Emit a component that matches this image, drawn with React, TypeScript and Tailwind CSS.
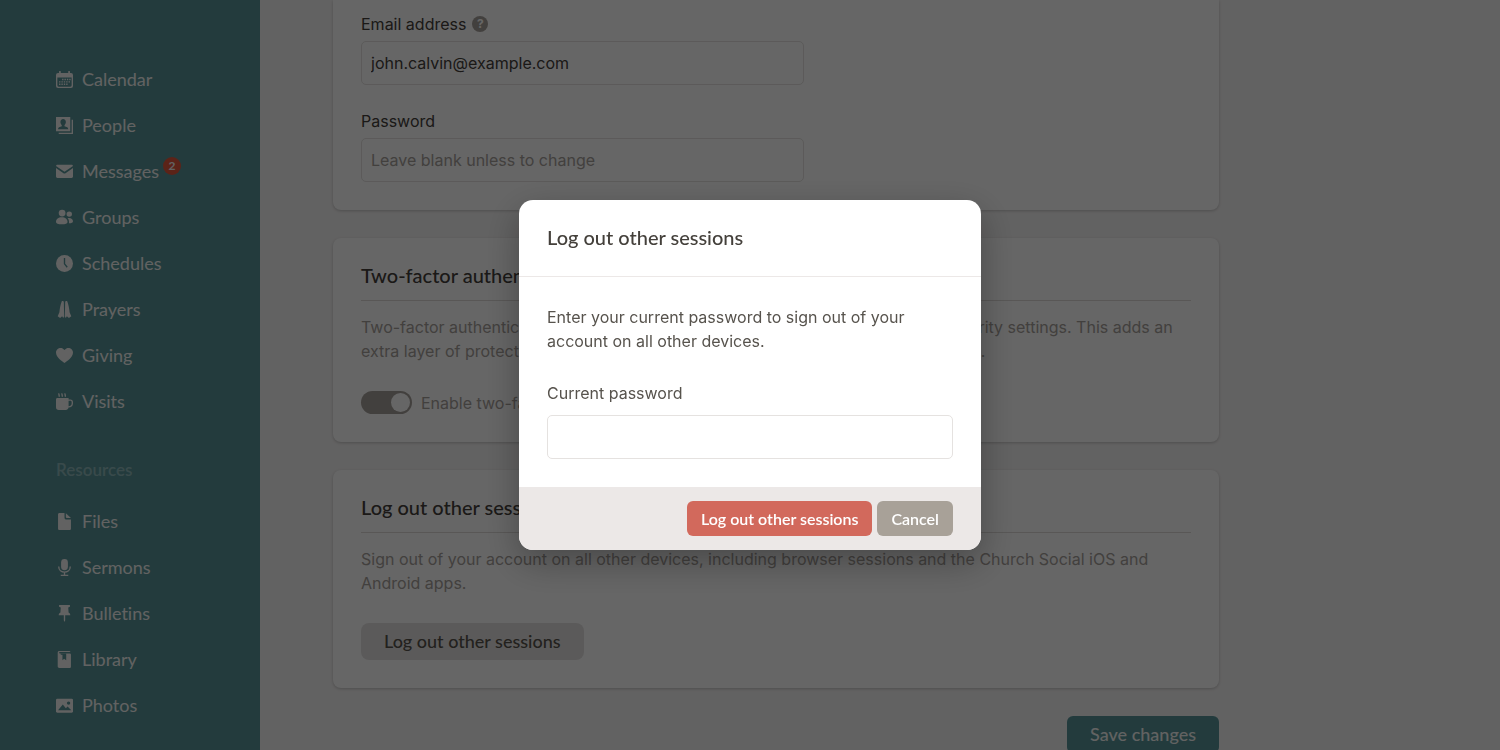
import { useState, type ReactNode } from 'react';

interface NavItem {
  name: string;
  icon: ReactNode;
  badge?: number;
}

const CUT = 'fill-[#57959a]';
const CUT_STROKE = 'stroke-[#57959a]';

const mainItems: NavItem[] = [
  {
    name: 'Calendar',
    icon: (
      <>
        <path fillRule="evenodd" d="M6 6h3V2a2 2 0 0 1 5 0v4h22V2a2 2 0 0 1 5 0v4h3a6 6 0 0 1 6 6v32a6 6 0 0 1-6 6H6a6 6 0 0 1-6-6V12a6 6 0 0 1 6-6Zm-2 13v23a4 4 0 0 0 4 4h34a4 4 0 0 0 4-4V19Z" />
        <path d="M18 23h4v4h-4zM25 23h4v4h-4zM32 23h4v4h-4zM39 23h4v4h-4zM9 30h4v4H9zM16 30h4v4h-4zM23 30h4v4h-4zM30 30h4v4h-4zM37 30h4v4h-4zM9 37h4v4H9zM16 37h4v4h-4zM23 37h4v4h-4zM30 37h4v4h-4z" />
      </>
    ),
  },
  {
    name: 'People',
    icon: (
      <>
        <path d="M0 0h42v42H0zM46 8h4v42H8v-4h38z" />
        <path className={CUT} d="M21 6c5 0 8 4 8 9 0 4-2 7-4 9v3l8 3c2 1 3 3 3 6H6c0-3 1-5 3-6l8-3v-3c-2-2-4-5-4-9 0-5 3-9 8-9Z" />
      </>
    ),
  },
  {
    name: 'Messages',
    badge: 2,
    icon: <path d="M4 5h42c2 0 4 2 4 4L25 26 0 9c0-2 2-4 4-4ZM0 15l22 15c2 1 4 1 6 0l22-15v25c0 2-2 4-4 4H4c-2 0-4-2-4-4Z" />,
  },
  {
    name: 'Groups',
    icon: (
      <>
        <circle cx="18" cy="12" r="10" />
        <circle cx="39" cy="15" r="8" />
        <path d="M0 38c0-8 7-14 17-14s17 6 17 14c0 4-6 7-17 7S0 42 0 38ZM34 27c8-3 16 2 16 9 0 4-4 6-12 6 1-6 0-11-4-15Z" />
      </>
    ),
  },
  {
    name: 'Schedules',
    icon: (
      <>
        <circle cx="25" cy="25" r="25" />
        <path className={CUT_STROKE} fill="none" strokeWidth="4" d="M25 9v17l8 10" />
      </>
    ),
  },
  {
    name: 'Prayers',
    icon: (
      <path d="M17 1c2-2 6-1 6 2l1 42c0 2-1 4-3 4l-3-4-6 5-7-5 5-12c1-10 3-22 7-32ZM33 1c-2-2-6-1-6 2l-1 42c0 2 1 4 3 4l3-4 6 5 7-5-5-12C39 23 37 11 33 1Z" />
    ),
  },
  {
    name: 'Giving',
    icon: <path d="M25 47C18 41 0 31 0 16 0 4 16-3 25 9 34-3 50 4 50 16c0 15-18 25-25 31Z" />,
  },
  {
    name: 'Visits',
    icon: (
      <>
        <path fillRule="evenodd" d="M4 15h33v4h5c5 0 8 3 8 8v4c0 7-6 12-13 12-1 4-4 7-8 7H8c-5 0-8-3-8-8V19c0-2 2-4 4-4Zm33 8v16c5 0 9-3 9-8v-4c0-2-1-4-4-4Z" />
        <path fill="none" stroke="currentColor" strokeWidth="4" d="M9 1c-2 4 2 6 0 10M18 1c-2 4 2 6 0 10M27 1c-2 4 2 6 0 10" />
      </>
    ),
  },
];

const resourceItems: NavItem[] = [
  {
    name: 'Files',
    icon: <path d="M10 0h15v13c0 4 2 6 6 6h13v27c0 2-2 4-4 4H10c-2 0-4-2-4-4V4c0-2 2-4 4-4ZM29 1l15 14H32c-2 0-3-1-3-3Z" />,
  },
  {
    name: 'Sermons',
    icon: (
      <>
        <rect x="15" y="0" width="20" height="33" rx="10" />
        <path fill="none" stroke="currentColor" strokeWidth="4" d="M8 22c0 22 34 22 34 0M25 38v10M14 48h22" />
      </>
    ),
  },
  {
    name: 'Bulletins',
    icon: <path d="M9 0h32v5l-5 2 1 15c3 2 5 4 5 8H27v15l-2 5-2-5V30H8c0-4 2-6 5-8l1-15-5-2Z" />,
  },
  {
    name: 'Library',
    icon: (
      <>
        <path d="M10 0h30l3 3H11c-2 0-3 3 0 4h29c3 0 4 2 4 4v35c0 2-2 4-4 4H10c-3 0-5-2-5-5V5c0-3 2-5 5-5Z" />
        <path className={CUT} d="M14 7h16v20l-6-4-5 4V11h-5z" />
      </>
    ),
  },
  {
    name: 'Photos',
    icon: (
      <>
        <rect x="0" y="5" width="50" height="41" rx="4" />
        <circle className={CUT} cx="37" cy="18" r="5" />
        <path className={CUT} d="m6 39 14-17 9 11 5-5 11 11Z" />
      </>
    ),
  },
];

function NavLink({ item }: { item: NavItem }) {
  return (
    <li>
      <a href="#" className="flex h-[46px] items-center gap-[9px] text-lg text-stone-100">
        <svg viewBox="0 0 50 50" className="size-[17px] shrink-0 fill-current" aria-hidden="true">
          {item.icon}
        </svg>
        <span className="relative">
          {item.name}
          {item.badge && (
            <span className="absolute left-full top-0 ml-1 flex size-[18px] items-center justify-center rounded-full bg-[#e4573d] text-xs font-bold">
              {item.badge}
            </span>
          )}
        </span>
      </a>
    </li>
  );
}

function Card({ title, children }: { title: string; children: ReactNode }) {
  return (
    <section className="rounded-lg bg-white p-7 shadow-[0_1px_3px_rgba(0,0,0,0.2)]">
      <h2 className="border-b border-[#dedad8] pb-4 font-['Lato'] text-xl leading-[18px] font-medium text-stone-700">{title}</h2>
      {children}
    </section>
  );
}

const inputClass = 'h-11 w-full rounded-[5px] border border-[#e5e2e0] bg-white px-[9px] outline-none placeholder:text-stone-400';

function LogoutDialog({ onClose }: { onClose: () => void }) {
  return (
    <div className="fixed inset-0 flex items-center justify-center bg-black/60">
      <div
        role="dialog"
        aria-modal="true"
        aria-labelledby="dialog-title"
        className="w-full max-w-[462px] overflow-hidden rounded-[14px] bg-white text-stone-600 shadow-[0_12px_36px_rgba(0,0,0,0.3)]"
      >
        <h2
          id="dialog-title"
          className="border-b border-[#ece8e7] px-7 pt-6 pb-[26px] font-['Lato'] text-xl leading-[26px] font-medium text-stone-700"
        >
          Log out other sessions
        </h2>
        <div className="p-7">
          <p>Enter your current password to sign out of your account on all other devices.</p>
          <label htmlFor="current-password" className="mt-7 mb-[10px] block">
            Current password
          </label>
          <input id="current-password" type="password" className={inputClass} />
        </div>
        <div className="flex justify-end gap-[5px] bg-[#ece8e7] px-7 py-[14px] font-['Lato'] font-semibold text-white">
          <button type="button" className="h-[35px] rounded-md bg-[#d2695c] px-[14px]" onClick={onClose}>
            Log out other sessions
          </button>
          <button type="button" className="h-[35px] rounded-md bg-[#a8a198] px-[14px]" onClick={onClose}>
            Cancel
          </button>
        </div>
      </div>
    </div>
  );
}

export default function App() {
  const [open, setOpen] = useState(true);

  return (
    <div className="flex h-screen overflow-hidden bg-[#f5f4f4] font-['Inter',sans-serif] text-base text-stone-600 [font-variant-ligatures:none]">
      <nav className="w-[260px] shrink-0 bg-[#57959a] pt-14 pl-14 font-['Lato']">
        <ul>
          {mainItems.map((item) => (
            <NavLink key={item.name} item={item} />
          ))}
        </ul>
        <h3 className="mt-[34px] mb-4 text-[17px] leading-6 font-semibold text-white/35">Resources</h3>
        <ul>
          {resourceItems.map((item) => (
            <NavLink key={item.name} item={item} />
          ))}
        </ul>
      </nav>

      <main className="min-w-0 flex-1 px-[73px]">
        <form className="flex max-w-[886px] flex-col gap-7" onSubmit={(e) => e.preventDefault()}>
          <section className="rounded-b-lg bg-white px-7 pt-3 pb-7 shadow-[0_1px_3px_rgba(0,0,0,0.2)]">
            <div className="max-w-[443px] text-stone-700">
              <div className="mb-[5px] flex items-center gap-[6px]">
                <label htmlFor="email">Email address</label>
                <span className="flex size-4 items-center justify-center rounded-full bg-stone-400 text-xs font-bold text-white">?</span>
              </div>
              <input id="email" type="email" defaultValue="john.calvin@example.com" className={inputClass} />
              <label htmlFor="password" className="mt-6 mb-[5px] block">
                Password
              </label>
              <input id="password" type="password" placeholder="Leave blank unless to change" className={inputClass} />
            </div>
          </section>

          <Card title="Two-factor authentication">
            <p className="mt-[14px] mb-7 text-stone-400">
              Two-factor authentication can be enabled for your profile from your account security settings. This adds an extra layer of
              protection to your account by requiring a code whenever you sign in.
            </p>
            <label className="flex h-[23px] items-center gap-[9px] text-stone-400">
              <input
                type="checkbox"
                role="switch"
                defaultChecked
                className="flex h-[23px] w-[51px] appearance-none items-center rounded-full bg-stone-400 px-[2px] before:size-[19px] before:rounded-full before:bg-white checked:justify-end"
              />
              Enable two-factor authentication
            </label>
          </Card>

          <Card title="Log out other sessions">
            <p className="mt-[14px] mb-7 text-stone-400">
              Sign out of your account on all other devices, including browser sessions and the Church Social iOS and Android apps.
            </p>
            <button
              type="button"
              className="block h-[37px] rounded-lg bg-[#e4e2e1] px-[23px] pb-[2px] font-['Lato'] text-lg font-medium text-stone-600"
              onClick={() => setOpen(true)}
            >
              Log out other sessions
            </button>
          </Card>

          <button
            type="submit"
            className="h-[37px] self-end rounded-md bg-[#57959a] px-[23px] pb-[2px] font-['Lato'] text-lg font-medium text-stone-100"
          >
            Save changes
          </button>
        </form>
      </main>

      {open && <LogoutDialog onClose={() => setOpen(false)} />}
    </div>
  );
}
